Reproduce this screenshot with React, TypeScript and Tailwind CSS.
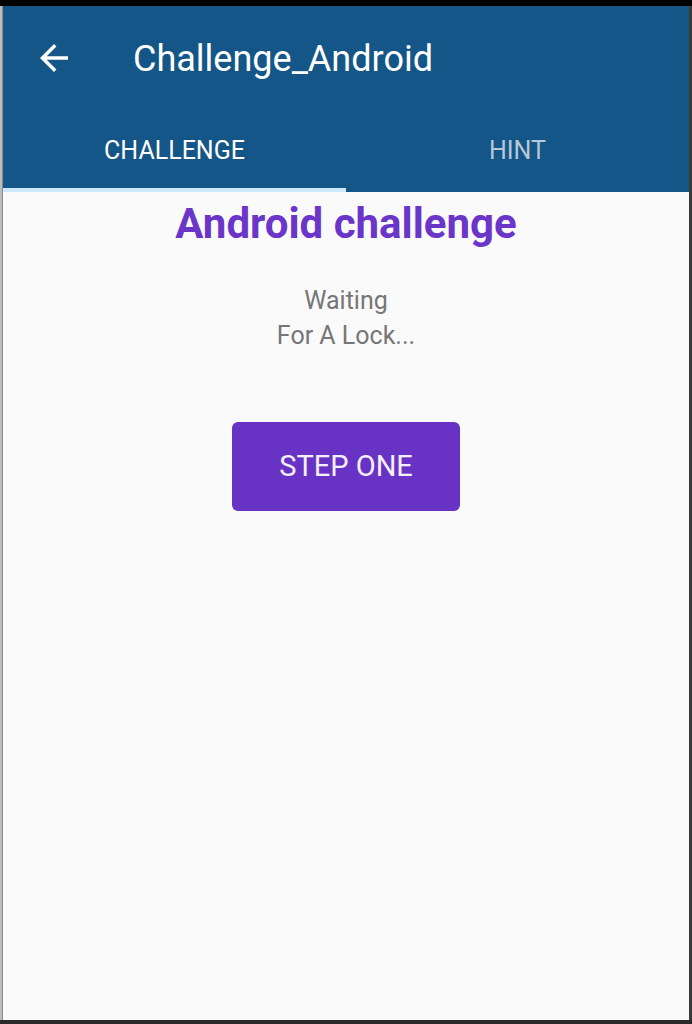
import React from "react";

function BackArrow() {
  return (
    <svg viewBox="0 0 24 24" className="w-[42px] h-[42px]" fill="#ffffff">
      <path d="M20 11H7.83l5.59-5.59L12 4l-8 8 8 8 1.41-1.41L7.83 13H20v-2z" />
    </svg>
  );
}

export default function App() {
  return (
    <div className="w-[692px] h-[1024px] flex flex-col bg-[#2a2a2a] font-['Roboto',sans-serif] overflow-hidden">
      <div className="h-[6px] bg-black" />
      <div className="flex flex-1">
        <div className="w-[3px] bg-[#bdbdbd] border-r border-[#8a8a8a]" />
        <div className="flex-1 flex flex-col bg-[#fafafa]">
          <header className="bg-[#135687] text-white">
            <div className="h-[104px] flex items-center">
              <div className="ml-[30px]">
                <BackArrow />
              </div>
              <h1 className="ml-[58px] mt-[2px] text-[36px] leading-none">Challenge_Android</h1>
            </div>
            <div className="flex h-[82px]">
              <div className="relative flex-1 flex items-center justify-center text-[25px] text-white">
                CHALLENGE
                <div className="absolute left-0 right-0 bottom-0 h-[4px] bg-[#cde9fb]" />
              </div>
              <div className="flex-1 flex items-center justify-center text-[25px] text-[#b7c8d8]">HINT</div>
            </div>
          </header>

          <main className="flex flex-col items-center">
            <h2 className="mt-[11px] text-[42px] font-bold text-[#6a35c8] leading-none">Android challenge</h2>
            <div className="mt-[38px] text-center text-[25px] text-[#767676] leading-[35px]">
              <p>Waiting</p>
              <p>For A Lock...</p>
            </div>
            <button className="mt-[69px] w-[228px] h-[89px] rounded-[6px] bg-[#6833c4] text-[#f4f0fb] text-[29px]">
              STEP ONE
            </button>
          </main>
        </div>
        <div className="w-[3px] bg-[#3a3a3a]" />
      </div>
      <div className="h-[4px] bg-[#2a2a2a]" />
    </div>
  );
}
